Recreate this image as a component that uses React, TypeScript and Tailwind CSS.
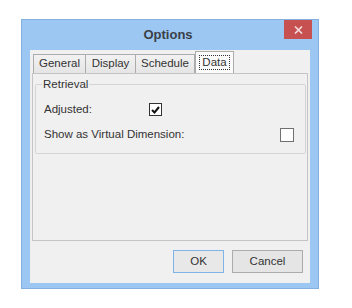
import React from "react";

export default function App() {
  return (
    <div
      className="h-[308px] w-[352px] bg-white pl-[21px] pt-[19px] text-[11.5px] text-[#222]"
      style={{ fontFamily: '"Liberation Sans", Arial, sans-serif' }}
    >
      <div className="flex h-[270px] w-[298px] flex-col border border-[#83b0e0] bg-[#9dc7f3] px-[8px] pb-[5px]">
        {/* title bar */}
        <div className="-mx-[8px] flex h-[30px] items-start">
          <div className="flex-1" />
          <div className="self-center pb-[1px] pl-[2px] text-[13px] font-bold text-[#3a3f48]">Options</div>
          <div className="flex flex-1 justify-end pr-[6px]">
            <div className="flex h-[19px] w-[28px] items-center justify-center bg-[#c75050]">
              <svg width="9" height="8" viewBox="0 0 9 8">
                <path d="M1 0.5 L8 7.5 M8 0.5 L1 7.5" stroke="#f4dede" strokeWidth="1.6" />
              </svg>
            </div>
          </div>
        </div>
        {/* client */}
        <div className="flex flex-1 flex-col bg-[#f0f0f0]">
          <div className="ml-[3px] mt-[1px] flex items-start text-[#333]">
            <div className="mt-[3px] flex h-[19px] w-[53px] items-center justify-center border border-b-0 border-[#acacac] bg-gradient-to-b from-[#f2f2f2] to-[#e5e5e5]">
              General
            </div>
            <div className="mt-[3px] flex h-[19px] w-[50px] items-center justify-center border border-b-0 border-l-0 border-[#acacac] bg-gradient-to-b from-[#f2f2f2] to-[#e5e5e5]">
              Display
            </div>
            <div className="mt-[3px] flex h-[19px] w-[59px] items-center justify-center border border-b-0 border-l-0 border-[#acacac] bg-gradient-to-b from-[#f2f2f2] to-[#e5e5e5]">
              Schedule
            </div>
            <div className="relative z-10 -mb-px flex h-[22px] w-[39px] items-start justify-center border border-b-0 border-[#acacac] bg-[#fbfbfb] pt-[3px]">
              <span className="border border-dotted border-[#333] px-[2px] leading-[13px]">Data</span>
            </div>
          </div>
          <div className="ml-[2px] h-[168px] w-[276px] border border-[#c4c4c4] bg-[#f0f0f0] px-[2px] pt-[4px]">
            <fieldset className="h-[76px] w-[271px] rounded-[2px] border border-[#d5d5d5] px-[8px]">
              <legend className="ml-[-2px] px-[1px] leading-[13px] text-[#333]">Retrieval</legend>
              <div className="mt-[12px] flex h-[13px] items-center">
                <span className="w-[105px] text-[#333]">Adjusted:</span>
                <div className="flex h-[13px] w-[13px] items-center justify-center border border-[#333] bg-white">
                  <svg width="9" height="8" viewBox="0 0 9 8">
                    <path d="M1 4 L3.5 6.5 L8 1" fill="none" stroke="#111" strokeWidth="2" />
                  </svg>
                </div>
              </div>
              <div className="mt-[12px] flex h-[14px] items-center pr-[3px]">
                <span className="flex-1 text-[#333]">Show as Virtual Dimension:</span>
                <div className="h-[14px] w-[14px] border border-[#707070] bg-white" />
              </div>
            </fieldset>
          </div>
          <div className="mt-[9px] flex justify-end gap-[8px] pr-[7px]">
            <button className="h-[23px] w-[51px] border border-[#7eb4ea] bg-[#e8e8e8] text-[#333]">OK</button>
            <button className="h-[23px] w-[71px] border border-[#acacac] bg-[#e5e5e5] text-[#333]">Cancel</button>
          </div>
        </div>
      </div>
    </div>
  );
}
